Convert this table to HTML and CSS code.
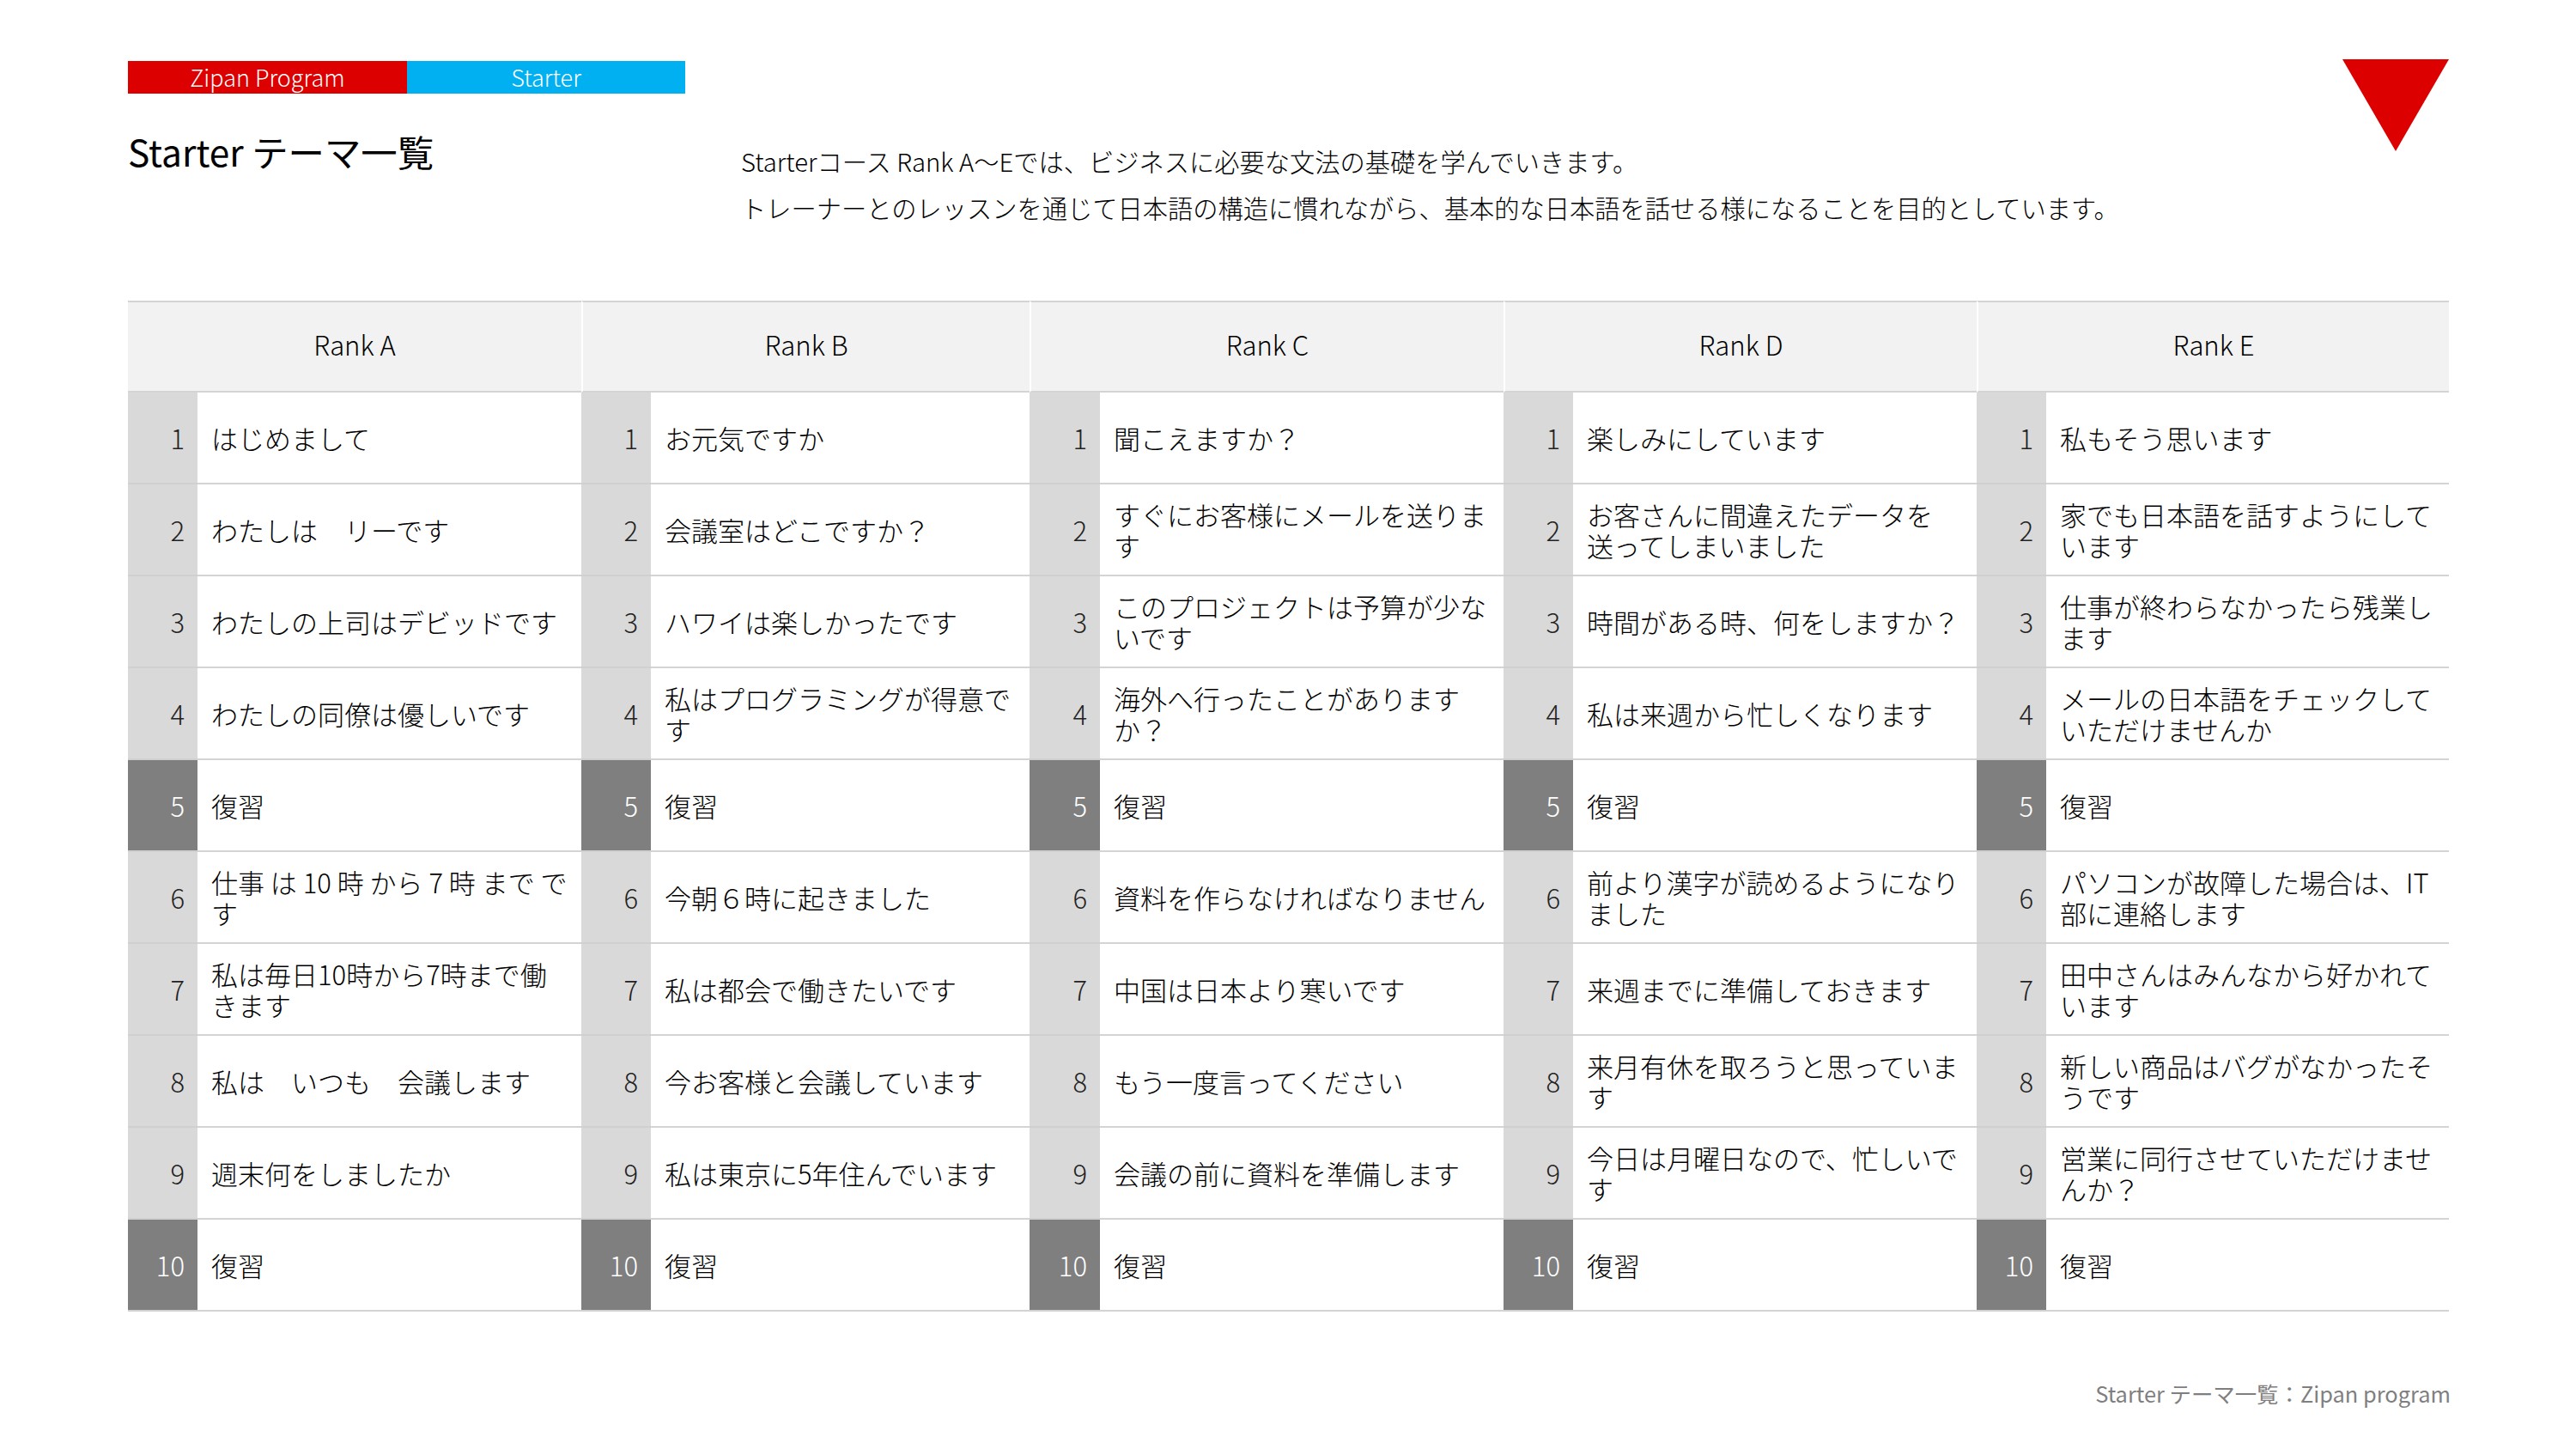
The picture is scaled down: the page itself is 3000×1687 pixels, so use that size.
FILE: index.html
```html
<!DOCTYPE html>
<html lang="ja">
<head>
<meta charset="utf-8">
<title>Starter テーマ一覧</title>
<link rel="stylesheet" href="styles.css">
</head>
<body>
<div class="page">
  <div class="top">
    <div class="brand">
      <div class="tags">
        <div class="tag tag-red">Zipan Program</div>
        <div class="tag tag-blue">Starter</div>
      </div>
      <h1 class="title">Starter テーマ一覧</h1>
    </div>
    <div class="desc">
      <div>Starterコース Rank A〜Eでは、ビジネスに必要な文法の基礎を学んでいきます。</div>
      <div>トレーナーとのレッスンを通じて日本語の構造に慣れながら、基本的な日本語を話せる様になることを目的としています。</div>
    </div>
    <svg class="mark" viewBox="0 0 124 107" aria-hidden="true"><polygon points="0,0 124,0 62,107" fill="#dd0000"/></svg>
  </div>

  <div class="grid">
    <div class="head first"><span>Rank A</span></div>
    <div class="head"><span>Rank B</span></div>
    <div class="head"><span>Rank C</span></div>
    <div class="head"><span>Rank D</span></div>
    <div class="head"><span>Rank E</span></div>

    <div class="num">1</div><div class="cell"><span>はじめまして</span></div>
    <div class="num">1</div><div class="cell"><span>お元気ですか</span></div>
    <div class="num">1</div><div class="cell"><span>聞こえますか？</span></div>
    <div class="num">1</div><div class="cell"><span>楽しみにしています</span></div>
    <div class="num">1</div><div class="cell"><span>私もそう思います</span></div>

    <div class="num">2</div><div class="cell"><span>わたしは　リーです</span></div>
    <div class="num">2</div><div class="cell"><span>会議室はどこですか？</span></div>
    <div class="num">2</div><div class="cell"><span>すぐにお客様にメールを送ります</span></div>
    <div class="num">2</div><div class="cell cell-narrow"><span>お客さんに間違えたデータを送ってしまいました</span></div>
    <div class="num">2</div><div class="cell"><span>家でも日本語を話すようにしています</span></div>

    <div class="num">3</div><div class="cell"><span>わたしの上司はデビッドです</span></div>
    <div class="num">3</div><div class="cell"><span>ハワイは楽しかったです</span></div>
    <div class="num">3</div><div class="cell"><span>このプロジェクトは予算が少ないです</span></div>
    <div class="num">3</div><div class="cell"><span>時間がある時、何をしますか？</span></div>
    <div class="num">3</div><div class="cell"><span>仕事が終わらなかったら残業します</span></div>

    <div class="num">4</div><div class="cell"><span>わたしの同僚は優しいです</span></div>
    <div class="num">4</div><div class="cell"><span>私はプログラミングが得意です</span></div>
    <div class="num">4</div><div class="cell"><span>海外へ行ったことがありますか？</span></div>
    <div class="num">4</div><div class="cell"><span>私は来週から忙しくなります</span></div>
    <div class="num">4</div><div class="cell"><span>メールの日本語をチェックしていただけませんか</span></div>

    <div class="num review">5</div><div class="cell"><span>復習</span></div>
    <div class="num review">5</div><div class="cell"><span>復習</span></div>
    <div class="num review">5</div><div class="cell"><span>復習</span></div>
    <div class="num review">5</div><div class="cell"><span>復習</span></div>
    <div class="num review">5</div><div class="cell"><span>復習</span></div>

    <div class="num">6</div><div class="cell"><span>仕事 は 10 時 から 7 時 まで で す</span></div>
    <div class="num">6</div><div class="cell"><span>今朝６時に起きました</span></div>
    <div class="num">6</div><div class="cell"><span>資料を作らなければなりません</span></div>
    <div class="num">6</div><div class="cell"><span>前より漢字が読めるようになりました</span></div>
    <div class="num">6</div><div class="cell"><span>パソコンが故障した場合は、IT部に連絡します</span></div>

    <div class="num">7</div><div class="cell"><span>私は毎日10時から7時まで働きます</span></div>
    <div class="num">7</div><div class="cell"><span>私は都会で働きたいです</span></div>
    <div class="num">7</div><div class="cell"><span>中国は日本より寒いです</span></div>
    <div class="num">7</div><div class="cell"><span>来週までに準備しておきます</span></div>
    <div class="num">7</div><div class="cell"><span>田中さんはみんなから好かれています</span></div>

    <div class="num">8</div><div class="cell"><span>私は　いつも　会議します</span></div>
    <div class="num">8</div><div class="cell"><span>今お客様と会議しています</span></div>
    <div class="num">8</div><div class="cell"><span>もう一度言ってください</span></div>
    <div class="num">8</div><div class="cell"><span>来月有休を取ろうと思っています</span></div>
    <div class="num">8</div><div class="cell"><span>新しい商品はバグがなかったそうです</span></div>

    <div class="num">9</div><div class="cell"><span>週末何をしましたか</span></div>
    <div class="num">9</div><div class="cell"><span>私は東京に5年住んでいます</span></div>
    <div class="num">9</div><div class="cell"><span>会議の前に資料を準備します</span></div>
    <div class="num">9</div><div class="cell"><span>今日は月曜日なので、忙しいです</span></div>
    <div class="num">9</div><div class="cell"><span>営業に同行させていただけませんか？</span></div>

    <div class="num review">10</div><div class="cell"><span>復習</span></div>
    <div class="num review">10</div><div class="cell"><span>復習</span></div>
    <div class="num review">10</div><div class="cell"><span>復習</span></div>
    <div class="num review">10</div><div class="cell"><span>復習</span></div>
    <div class="num review">10</div><div class="cell"><span>復習</span></div>
  </div>

  <div class="footer">Starter テーマ一覧：Zipan program</div>
</div>
</body>
</html>
```

FILE: styles.css
```css
html, body {
  margin: 0;
  padding: 0;
  background: #ffffff;
}

body {
  font-family: "Noto Sans CJK JP", "Noto Sans", sans-serif;
  color: #000000;
}

.page {
  width: 3000px;
  height: 1687px;
  box-sizing: border-box;
  padding: 71px 148px 0 149px;
}

.top {
  display: flex;
  align-items: flex-start;
  height: 279px;
}

.brand {
  flex: none;
  width: 714px;
}

.tags {
  display: flex;
}

.tag {
  width: 325px;
  height: 38px;
  display: flex;
  align-items: center;
  justify-content: center;
  padding-bottom: 2px;
  box-sizing: border-box;
  color: #ffffff;
  font-size: 27px;
  font-weight: 300;
  line-height: 1;
}

.tag-red {
  background: #dd0000;
}

.tag-blue {
  background: #00b0f0;
  width: 324px;
}

.title {
  margin: 40px 0 0;
  font-size: 42.4px;
  font-weight: 400;
  line-height: 53px;
}

.desc {
  flex: none;
  margin-top: 89px;
  font-size: 29.25px;
  line-height: 54px;
  font-weight: 300;
  white-space: nowrap;
}

.mark {
  flex: none;
  margin-left: auto;
  margin-top: -2px;
  width: 124px;
  height: 107px;
}

.grid {
  display: grid;
  grid-template-columns: 81px 447px 81px 441px 82px 470px 81px 470px 81px 469px;
  grid-template-rows: 107px repeat(10, 107px);
  font-size: 31px;
  font-weight: 300;
}

.head {
  grid-column: span 2;
  display: flex;
  align-items: center;
  justify-content: center;
  padding-bottom: 6px;
  box-sizing: border-box;
  background: #f2f2f2;
  border-top: 2px solid #d4d4d4;
  border-bottom: 2px solid #d4d4d4;
  border-left: 2px solid #ffffff;
  line-height: 36px;
}

.head.first {
  border-left: 0;
}

.num {
  display: flex;
  align-items: center;
  justify-content: flex-end;
  padding-right: 15px;
  background: #d9d9d9;
  color: #222222;
  border-bottom: 2px solid #d0d0d0;
  line-height: 36px;
}

.num.review {
  background: #7f7f7f;
  color: #ffffff;
}

.cell {
  display: flex;
  align-items: center;
  padding: 0 10px 0 16px;
  border-bottom: 2px solid #d4d4d4;
  line-height: 36px;
}

.cell-narrow {
  padding-right: 40px;
}

.footer {
  margin-top: 75px;
  margin-right: -2px;
  text-align: right;
  font-size: 25.4px;
  line-height: 40px;
  color: #7f7f7f;
  font-weight: 400;
}
```
